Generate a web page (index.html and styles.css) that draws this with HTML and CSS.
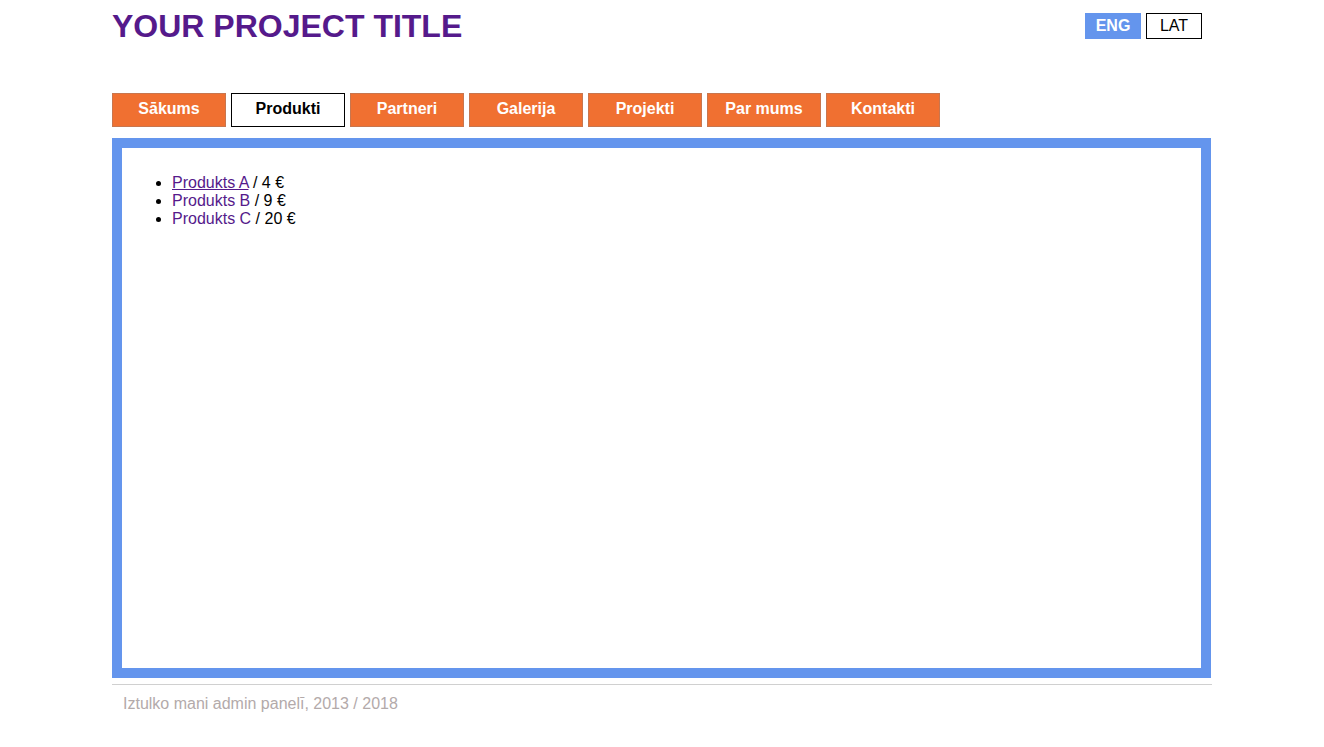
FILE: index.html
```html
<!DOCTYPE html>
<html lang="lv">
<head>
<meta charset="utf-8">
<title>Produkti</title>
<link rel="stylesheet" href="styles.css">
</head>
<body>
<div class="page">
  <header class="header">
    <h1 class="title">YOUR PROJECT TITLE</h1>
    <div class="langs">
      <a class="lang lang-active" href="#">ENG</a>
      <a class="lang" href="#">LAT</a>
    </div>
  </header>
  <nav class="nav">
    <a class="nav-item" href="#">Sākums</a>
    <a class="nav-item nav-active" href="#">Produkti</a>
    <a class="nav-item" href="#">Partneri</a>
    <a class="nav-item" href="#">Galerija</a>
    <a class="nav-item" href="#">Projekti</a>
    <a class="nav-item" href="#">Par mums</a>
    <a class="nav-item" href="#">Kontakti</a>
  </nav>
  <main class="content">
    <ul class="products">
      <li><a class="prod prod-hover" href="#">Produkts A</a> / 4 €</li>
      <li><a class="prod" href="#">Produkts B</a> / 9 €</li>
      <li><a class="prod" href="#">Produkts C</a> / 20 €</li>
    </ul>
  </main>
  <footer class="footer">Iztulko mani admin panelī, 2013 / 2018</footer>
</div>
</body>
</html>
```
FILE: styles.css
```css
html, body {
  margin: 0;
  padding: 0;
  background: #fff;
}
body {
  font-family: "Liberation Sans", Arial, sans-serif;
  font-size: 16px;
  color: #000;
}
.page {
  width: 1100px;
  margin: 0 auto;
}
.header {
  display: flex;
  justify-content: space-between;
  align-items: flex-start;
  height: 93px;
}
.title {
  margin: 8px 0 0;
  font-size: 32px;
  font-weight: bold;
  color: #551a8b;
  line-height: 37px;
}
.langs {
  display: flex;
  gap: 5px;
  margin-top: 13px;
  margin-right: 10px;
}
.lang {
  box-sizing: border-box;
  width: 56px;
  height: 26px;
  line-height: 24px;
  text-align: center;
  text-decoration: none;
  color: #000;
  border: 1px solid #000;
  background: #fff;
}
.lang-active {
  background: #6495ed;
  border-color: #6495ed;
  color: #fff;
  font-weight: bold;
}
.nav {
  display: flex;
  gap: 5px;
}
.nav-item {
  box-sizing: border-box;
  width: 114px;
  height: 34px;
  line-height: 30px;
  text-align: center;
  text-decoration: none;
  font-weight: bold;
  color: #fff;
  background: #f07031;
  border: 1px solid #c8764e;
}
.nav-active {
  background: #fff;
  color: #000;
  border-color: #000;
}
.content {
  margin-top: 11px;
  margin-right: 1px;
  border: 10px solid #6495ed;
  padding: 10px;
  height: 500px;
}
.products {
  margin: 16px 0 0;
  padding-left: 40px;
  line-height: 18px;
}
.prod {
  color: #551a8b;
  text-decoration: none;
}
.prod-hover {
  text-decoration: underline;
}
.footer {
  margin-top: 6px;
  border-top: 1px solid #d0d0d0;
  padding: 10px 11px 9px;
  color: #b3aaaa;
  line-height: 18px;
}
```
